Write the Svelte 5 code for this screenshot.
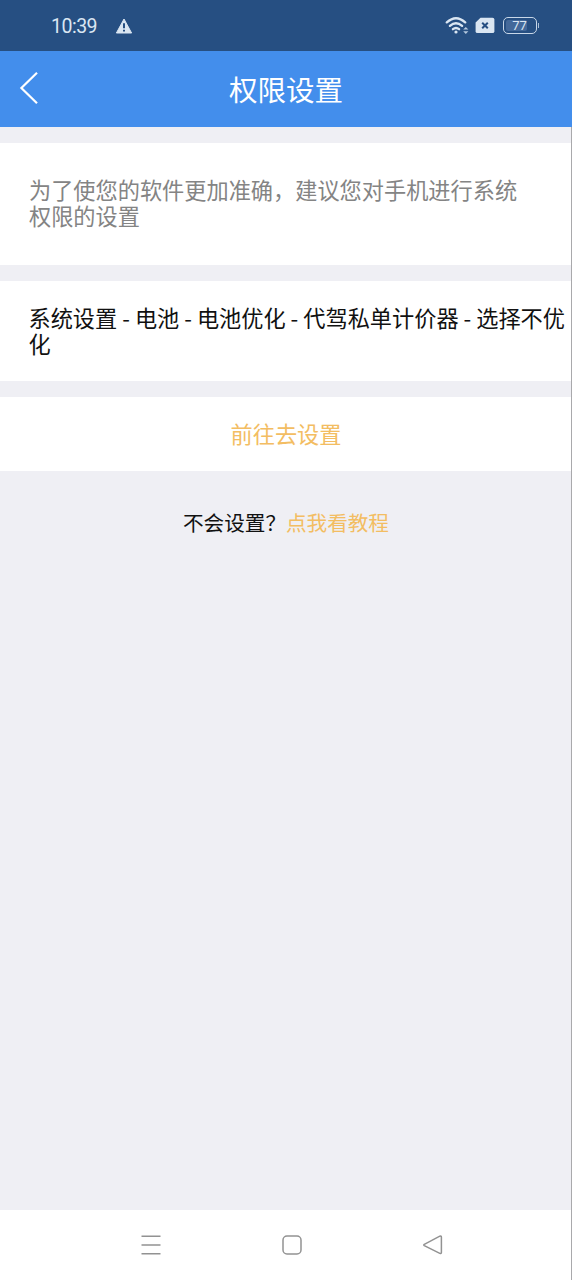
<script lang="ts">
	const time = '10:39';
	const battery = 77;
	const path = ['系统设置', '电池', '电池优化', '代驾私单计价器', '选择不优化'];
</script>

<div class="screen">
	<div class="status-bar">
		<span class="time">{time}</span>
		<svg class="warning" viewBox="0 0 18 16" width="18" height="16">
			<path d="M9 1 L16.6 15 H1.4 Z" fill="#dae6f2" stroke="#dae6f2" stroke-width="1" stroke-linejoin="round" />
			<path d="M9 5.3 V10.2 M9 11.8 V13.6" stroke="#264f82" stroke-width="2" />
		</svg>

		<div class="status-icons">
			<svg viewBox="0 0 24 20" width="24" height="20" fill="none" stroke="#dae6f2" stroke-width="2.3" stroke-linecap="round">
				<path d="M1.8 6.4 Q11 -2 20.2 6.4" />
				<path d="M4.9 9.9 Q11 4.5 17.1 9.9" />
				<path d="M7.9 13.2 Q11 10.7 14.1 13.2" />
				<circle cx="11" cy="16" r="1.6" fill="#dae6f2" stroke="none" />
				<path d="M18.2 13.6 L20.8 10.9 L23.4 13.6 Z M18.2 15.2 L20.8 17.9 L23.4 15.2 Z" fill="#b4c8de" stroke="none" />
			</svg>
			<svg class="sim" viewBox="0 0 20 17" width="20" height="17">
				<path d="M5.5 0.7 H17.5 Q19.4 0.7 19.4 2.6 V14.2 Q19.4 16.1 17.5 16.1 H2.5 Q0.6 16.1 0.6 14.2 V5.4 Z" fill="#dae6f2" />
				<path d="M7.2 5.7 L12.8 11.3 M12.8 5.7 L7.2 11.3" stroke="#264f82" stroke-width="2" />
			</svg>
			<div class="battery">
				<span class="level" style="width: {battery}%"></span>
				<span class="percent">{battery}</span>
			</div>
			<span class="battery-tip"></span>
		</div>
	</div>

	<header class="header">
		<button class="back" aria-label="返回">
			<svg viewBox="0 0 20 34" width="20" height="34" fill="none" stroke="#fff" stroke-width="2.2">
				<path d="M18 1.8 L2.4 17 L18 32.2" />
			</svg>
		</button>
		<h1>权限设置</h1>
	</header>

	<main>
		<p class="card tip">为了使您的软件更加准确，建议您对手机进行系统权限的设置</p>
		<p class="card path">{path.join(' - ')}</p>
		<button class="card go">前往去设置</button>
		<p class="help">不会设置？<span class="link">点我看教程</span></p>
	</main>

	<nav class="nav-bar">
		<svg viewBox="0 0 22 22" width="22" height="22">
			<path d="M1.5 2.3 H20.5 M1.5 11.1 H20.5 M1.5 19.8 H20.5" />
		</svg>
		<svg viewBox="0 0 22 22" width="22" height="22">
			<rect x="2" y="2" width="18" height="18" rx="4" />
		</svg>
		<svg viewBox="0 0 22 22" width="22" height="22">
			<path d="M2.3 10.3 L17.8 2.2 Q19.3 1.7 19.4 3.2 V18.4 Q19.3 19.9 17.8 19.4 L2.3 11.7 Q1.3 11 2.3 10.3 Z" />
		</svg>
	</nav>
</div>

<style>
	:global(body) {
		margin: 0;
	}

	.screen {
		display: flex;
		flex-direction: column;
		box-sizing: border-box;
		width: 572px;
		height: 1280px;
		border-right: 1px solid #a9a9ac;
		background: #efeff4;
		color: #111;
		font-family: 'Noto Sans CJK SC', sans-serif;
	}

	.status-bar {
		display: flex;
		align-items: center;
		box-sizing: border-box;
		height: 51px;
		padding: 0 33px 0 51px;
		margin-right: -1px;
		background: #264f82;
	}

	.time {
		width: 64px;
		font-family: Roboto, sans-serif;
		font-size: 19.5px;
		letter-spacing: -0.5px;
		line-height: 51px;
		color: #dae6f2;
		padding-top: 1px;
	}

	.status-icons {
		display: flex;
		align-items: center;
		margin-left: auto;
	}

	.sim {
		margin-left: 6px;
	}

	.battery {
		position: relative;
		box-sizing: border-box;
		width: 34px;
		height: 17px;
		margin-left: 8px;
		padding: 2px;
		border: 1.5px solid #c8d7e8;
		border-radius: 5px;
	}

	.level {
		display: block;
		height: 100%;
		border-radius: 2px;
		background: #44699a;
	}

	.percent {
		position: absolute;
		inset: 0;
		font-family: Roboto, sans-serif;
		font-size: 13px;
		line-height: 16px;
		text-align: center;
		color: #dae6f2;
	}

	.battery-tip {
		width: 1.5px;
		height: 5px;
		margin-left: 1px;
		background: #a9bfd8;
	}

	.header {
		position: relative;
		height: 76px;
		margin-right: -1px;
		background: #438eec;
	}

	.header h1 {
		margin: 0;
		font-size: 28.5px;
		font-weight: 400;
		line-height: 76px;
		text-align: center;
		color: #fff;
	}

	.back {
		position: absolute;
		top: 20px;
		left: 19px;
		padding: 0;
		border: none;
		background: none;
		line-height: 0;
		cursor: pointer;
	}

	main {
		display: flex;
		flex: 1;
		flex-direction: column;
		gap: 16px;
		padding-top: 16px;
	}

	.card {
		box-sizing: border-box;
		margin: 0;
		border: none;
		background: #fff;
		font-family: inherit;
		font-size: 22.2px;
		line-height: 26px;
	}

	.tip {
		height: 122px;
		padding: 33px 44px 0 29px;
		color: #848484;
	}

	.path {
		height: 100px;
		padding: 23px 0 0 28.5px;
	}

	.go {
		height: 74px;
		padding: 0 0 2px 1px;
		color: #f3bd62;
		cursor: pointer;
	}

	.help {
		margin: 19px 0 0;
		padding-left: 1px;
		font-size: 20.6px;
		line-height: 32px;
		text-align: center;
	}

	.link {
		color: #f3bd62;
	}

	.nav-bar {
		display: flex;
		justify-content: space-between;
		box-sizing: border-box;
		height: 70px;
		padding: 24px 127px 0 140px;
		background: #fff;
	}

	.nav-bar svg {
		fill: none;
		stroke: #929292;
		stroke-width: 1.5;
	}
</style>
